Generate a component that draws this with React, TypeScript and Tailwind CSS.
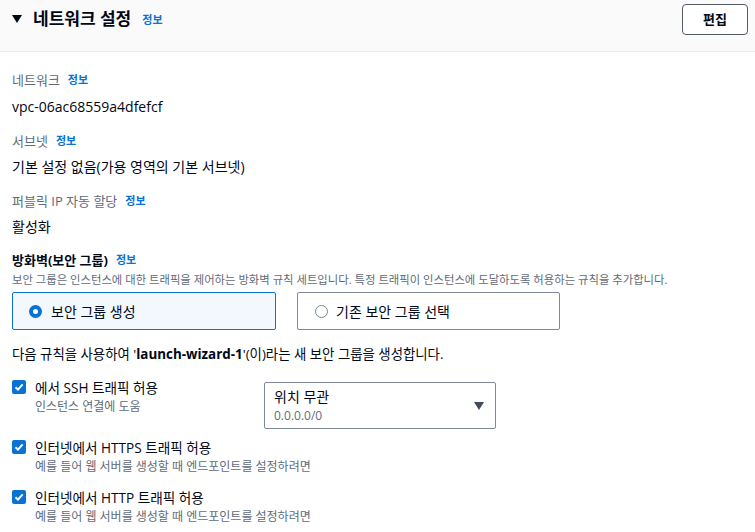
import React from "react";

const font = { fontFamily: '"Open Sans", "Noto Sans CJK KR", sans-serif' };

function Info() {
  return <span className="ml-2 text-[11px] font-bold text-[#0972d3]">정보</span>;
}

function Check() {
  return (
    <div className="mt-[1px] flex h-[14px] w-[14px] shrink-0 items-center justify-center rounded-[2px] bg-[#0972d3]">
      <svg width="10" height="10" viewBox="0 0 10 10">
        <path d="M1.5 5.2 L4 7.6 L8.6 2.4" fill="none" stroke="white" strokeWidth="2" />
      </svg>
    </div>
  );
}

function CheckRow({ title, sub }: { title: string; sub: string }) {
  return (
    <div className="flex gap-[9px]">
      <Check />
      <div className="flex flex-col">
        <span className="text-[13.6px] leading-[18px] text-[#000716]">{title}</span>
        <span className="mt-[2px] text-[12px] leading-[16px] text-[#5f6b7a]">{sub}</span>
      </div>
    </div>
  );
}

export default function App() {
  return (
    <div className="h-[532px] w-[755px] overflow-hidden bg-white" style={font}>
      <div className="flex h-[52px] items-start justify-between border-b border-[#e9ebed] bg-[#fafafa] pl-[12px] pr-[7px]">
        <div className="flex items-center pt-[6px]">
          <svg width="10" height="8" viewBox="0 0 10 8" className="mr-[11px]">
            <path d="M0 0 H10 L5 8 Z" fill="#000716" />
          </svg>
          <span className="text-[17px] font-bold leading-[26px] text-[#000716]">네트워크 설정</span>
          <span className="ml-[11px] mt-[2px] text-[11px] font-bold text-[#0972d3]">정보</span>
        </div>
        <button className="mt-[4px] h-[31px] w-[66px] rounded-[4px] border border-[#545b64] bg-white text-[13px] font-bold text-[#000716]">
          편집
        </button>
      </div>

      <div className="flex flex-col px-[12px] pt-[19px]">
        <div className="flex items-center text-[13px] leading-[18px] text-[#5f6b7a]">
          네트워크<Info />
        </div>
        <div className="mt-[9px] text-[14px] leading-[18px] text-[#000716]">vpc-06ac68559a4dfefcf</div>

        <div className="mt-[16px] flex items-center text-[13px] leading-[18px] text-[#5f6b7a]">
          서브넷<Info />
        </div>
        <div className="mt-[8px] text-[14px] leading-[18px] text-[#000716]">기본 설정 없음(가용 영역의 기본 서브넷)</div>

        <div className="mt-[16px] flex items-center text-[13px] leading-[18px] text-[#5f6b7a]">
          퍼블릭 IP 자동 할당<Info />
        </div>
        <div className="mt-[8px] text-[14px] leading-[18px] text-[#000716]">활성화</div>

        <div className="mt-[15px] flex items-center text-[13px] font-bold leading-[18px] text-[#000716]">
          방화벽(보안 그룹)<Info />
        </div>
        <div className="mt-[3px] text-[11.35px] leading-[16px] text-[#5f6b7a]">
          보안 그룹은 인스턴스에 대한 트래픽을 제어하는 방화벽 규칙 세트입니다. 특정 트래픽이 인스턴스에 도달하도록 허용하는 규칙을 추가합니다.
        </div>

        <div className="mt-[4px] flex gap-[21px]">
          <div className="flex h-[38px] w-[264px] items-center rounded-[2px] border border-[#0972d3] bg-[#f2f8fd] pl-[16px]">
            <div className="flex h-[13px] w-[13px] items-center justify-center rounded-full bg-[#0972d3]">
              <div className="h-[5px] w-[5px] rounded-full bg-white" />
            </div>
            <span className="ml-[9px] text-[14px] text-[#000716]">보안 그룹 생성</span>
          </div>
          <div className="flex h-[38px] w-[263px] items-center rounded-[2px] border border-[#7d8998] bg-white pl-[17px]">
            <div className="h-[13px] w-[13px] rounded-full border border-[#7d8998]" />
            <span className="ml-[8px] text-[14px] text-[#000716]">기존 보안 그룹 선택</span>
          </div>
        </div>

        <div className="mt-[15px] text-[13.4px] leading-[18px] text-[#000716]">
          다음 규칙을 사용하여 '<b>launch-wizard-1</b>'(이)라는 새 보안 그룹을 생성합니다.
        </div>

        <div className="mt-[16px] flex items-start">
          <div className="w-[252px]">
            <CheckRow title="에서 SSH 트래픽 허용" sub="인스턴스 연결에 도움" />
          </div>
          <div className="mt-[3px] flex h-[47px] w-[232px] items-center justify-between rounded-[2px] border border-[#7d8998] pl-[9px] pr-[11px]">
            <div className="flex flex-col">
              <span className="text-[14px] leading-[18px] text-[#000716]">위치 무관</span>
              <span className="mt-[2px] text-[12px] leading-[16px] text-[#5f6b7a]">0.0.0.0/0</span>
            </div>
            <svg width="10" height="8" viewBox="0 0 10 8">
              <path d="M0 0 H10 L5 8 Z" fill="#414d5c" />
            </svg>
          </div>
        </div>

        <div className="mt-[10px]">
          <CheckRow title="인터넷에서 HTTPS 트래픽 허용" sub="예를 들어 웹 서버를 생성할 때 엔드포인트를 설정하려면" />
        </div>
        <div className="mt-[14px]">
          <CheckRow title="인터넷에서 HTTP 트래픽 허용" sub="예를 들어 웹 서버를 생성할 때 엔드포인트를 설정하려면" />
        </div>
      </div>
    </div>
  );
}
